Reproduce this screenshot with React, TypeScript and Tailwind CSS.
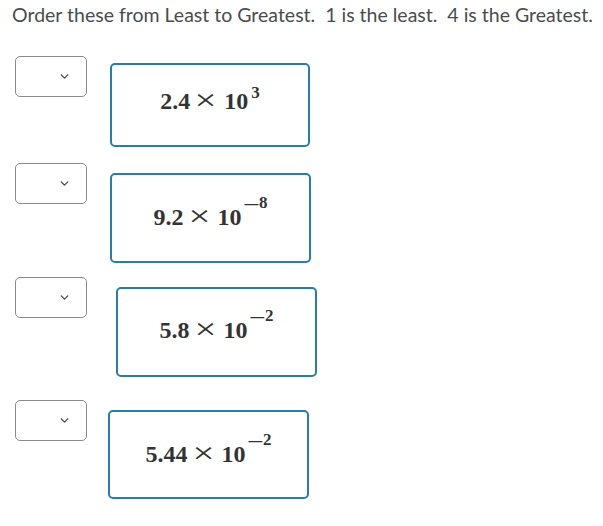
import { ChevronDown } from "lucide-react";

interface Item {
  mantissa: string;
  exponent: string;
  negative: boolean;
  rowClass: string;
  boxClass: string;
}

const items: Item[] = [
  { mantissa: "2.4", exponent: "3", negative: false, rowClass: "mt-[28px]", boxClass: "ml-[23px] mt-[7px] h-[84px] w-[200px] pb-[13px]" },
  { mantissa: "9.2", exponent: "8", negative: true, rowClass: "mt-[16px]", boxClass: "ml-[23px] mt-[10px] h-[90px] w-[201px] pb-[6px]" },
  { mantissa: "5.8", exponent: "2", negative: true, rowClass: "mt-[14px]", boxClass: "ml-[29px] mt-[10px] h-[90px] w-[201px] pb-[8px]" },
  { mantissa: "5.44", exponent: "2", negative: true, rowClass: "mt-[23px]", boxClass: "ml-[21px] mt-[10px] h-[89px] w-[201px] pb-[6px]" },
];

function Dropdown() {
  return (
    <div className="flex h-[41px] w-[72px] shrink-0 items-center justify-end rounded-[5px] border border-[#8a8a8a] bg-white pr-[15px]">
      <ChevronDown size={13} strokeWidth={2.6} className="text-[#494c4e]" />
    </div>
  );
}

function Sci({ mantissa, exponent, negative }: { mantissa: string; exponent: string; negative: boolean }) {
  return (
    <div className="inline-flex items-baseline font-['Liberation_Serif',serif] text-[24px] leading-none font-bold text-[#333]">
      <span>{mantissa}</span>
      <span className="relative top-[1px] ml-[7px] inline-block scale-x-[1.3] text-[30px] font-normal">×</span>
      <span className="ml-[10px]">10</span>
      {negative ? (
        <span className="relative -top-[17px] ml-[1px] inline-flex items-baseline">
          <span className="relative top-[4px] inline-block origin-left scale-x-[1.35] text-[22px] font-normal">−</span>
          <span className="ml-[4px] text-[17px]">{exponent}</span>
        </span>
      ) : (
        <span className="relative -top-[11px] ml-[3px] text-[17px]">{exponent}</span>
      )}
    </div>
  );
}

export default function App() {
  return (
    <div className="min-h-[526px] w-[603px] bg-white font-['Lato',sans-serif]">
      <p className="pl-[12px] pt-[1px] text-[19.5px] leading-[27px] whitespace-nowrap text-[#494c4e]">
        Order these from Least to Greatest.&nbsp; 1 is the least.&nbsp; 4 is the Greatest.
      </p>
      <div className="flex flex-col pl-[15px]">
        {items.map((item) => (
          <div key={item.mantissa} className={`flex items-start ${item.rowClass}`}>
            <Dropdown />
            <div
              className={`flex items-center justify-center rounded-[5px] border-2 border-[#2b7cab] ${item.boxClass}`}
            >
              <Sci mantissa={item.mantissa} exponent={item.exponent} negative={item.negative} />
            </div>
          </div>
        ))}
      </div>
    </div>
  );
}
